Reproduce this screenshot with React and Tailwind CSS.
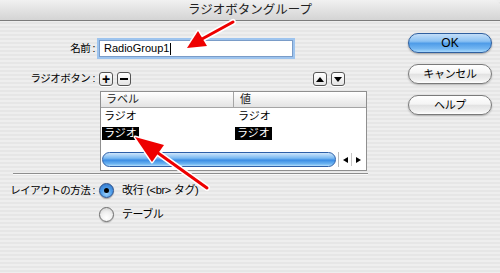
const font = "font-['Lucida_Grande','Liberation_Sans','Noto_Sans_CJK_JP',sans-serif]";

function SmallButton({ children }) {
  return (
    <div className="w-[14px] h-[14px] rounded-[3px] border border-[#555] bg-[linear-gradient(to_bottom,#ffffff,#e4e4e4)] flex items-center justify-center shadow-[0_1px_0_#fff]">
      {children}
    </div>
  );
}

function AquaButton({ label, primary }) {
  return (
    <div
      className={
        primary
          ? "h-[20px] w-[84px] rounded-full border border-[#2f5f9f] bg-[linear-gradient(to_bottom,#c3def8_0%,#8cc2f3_40%,#4f9ce8_52%,#71b5f1_80%,#a6d7fb_100%)] flex items-center justify-center text-[12px] text-black shadow-[0_1px_2px_rgba(0,0,0,0.35)]"
          : "h-[20px] w-[84px] rounded-full border border-[#7a7a7a] bg-[linear-gradient(to_bottom,#ffffff_0%,#f4f4f4_45%,#e2e2e2_52%,#f1f1f1_85%,#ffffff_100%)] flex items-center justify-center text-[11px] tracking-[-0.3px] text-black shadow-[0_1px_2px_rgba(0,0,0,0.25)]"
      }
    >
      {label}
    </div>
  );
}

function Radio({ checked }) {
  return checked ? (
    <div className="w-[15px] h-[15px] rounded-full border border-[#2a4f8a] bg-[radial-gradient(circle_at_50%_75%,#9fd2fb_0%,#4e9de9_45%,#2f6fc4_100%)] flex items-center justify-center shadow-[0_1px_1px_rgba(0,0,0,0.3)]">
      <div className="w-[5px] h-[5px] rounded-full bg-black" />
    </div>
  ) : (
    <div className="w-[15px] h-[15px] rounded-full border border-[#6d6d6d] bg-[radial-gradient(circle_at_50%_75%,#ffffff_0%,#efefef_50%,#c9c9c9_100%)] shadow-[0_1px_1px_rgba(0,0,0,0.2)]" />
  );
}

function Label({ children }) {
  return <div className="w-[99px] text-right pr-[4px] text-[10.5px] tracking-[-0.5px] whitespace-nowrap">{children}</div>;
}

export default function App() {
  return (
    <div
      className={`relative w-[500px] h-[273px] overflow-hidden text-[11px] text-black ${font} bg-[repeating-linear-gradient(to_bottom,#eeeeee_0px,#eeeeee_2px,#e6e6e6_2px,#e6e6e6_4px)]`}
    >
      {/* title bar */}
      <div className="h-[21px] rounded-tr-[6px] bg-[linear-gradient(to_bottom,#f1f1f1,#d4d4d4)] border-b border-[#7c7c7c] flex items-center justify-center text-[12.5px] text-[#222]">
        ラジオボタングループ
      </div>

      <div className="flex">
        {/* left side */}
        <div className="w-[408px]">
          <div className="flex items-center mt-[19px] h-[17px]">
            <Label>名前 :</Label>
            <div className="w-[194px] h-[17px] bg-white border border-[#7a9cc8] shadow-[0_0_0_2px_#9ec4ee] flex items-center pl-[4px] text-[11px]">
              RadioGroup1<span className="w-px h-[12px] bg-black ml-px" />
            </div>
          </div>

          <div className="flex items-center mt-[15px] h-[14px]">
            <Label>ラジオボタン :</Label>
            <div className="w-[246px] flex justify-between">
              <div className="flex gap-[4px]">
                <SmallButton>
                  <span className="text-[14px] font-bold leading-none">+</span>
                </SmallButton>
                <SmallButton>
                  <span className="w-[8px] h-[2px] bg-black" />
                </SmallButton>
              </div>
              <div className="flex gap-[4px]">
                <SmallButton>
                  <span className="w-0 h-0 border-x-[4px] border-x-transparent border-b-[5px] border-b-black" />
                </SmallButton>
                <SmallButton>
                  <span className="w-0 h-0 border-x-[4px] border-x-transparent border-t-[5px] border-t-black" />
                </SmallButton>
              </div>
            </div>
          </div>

          {/* table */}
          <div className="ml-[100px] mt-[5px] w-[267px] h-[80px] bg-white border border-[#8f8f8f] flex flex-col">
            <div className="h-[16px] flex bg-[linear-gradient(to_bottom,#ffffff,#e3e3e3)] border-b border-[#a5a5a5] text-[#222]">
              <div className="w-[133px] pl-[5px] border-r border-[#a5a5a5] flex items-center">ラベル</div>
              <div className="flex-1 pl-[6px] flex items-center">値</div>
            </div>
            <div className="h-[17px] flex items-center">
              <div className="w-[133px] pl-[3px]">ラジオ</div>
              <div className="flex-1 pl-[4px]">ラジオ</div>
            </div>
            <div className="h-[16px] flex items-center">
              <div className="w-[133px] pl-[1px]">
                <span className="bg-black text-white px-[2px] leading-[13px] inline-block">ラジオ</span>
              </div>
              <div className="flex-1 pl-[1px]">
                <span className="bg-black text-white px-[2px] leading-[13px] inline-block">ラジオ</span>
              </div>
            </div>
            <div className="mt-auto mb-[2px] h-[17px] flex items-center">
              <div className="w-[234px] h-[15px] ml-[1px] rounded-full border border-[#2d5fa8] bg-[linear-gradient(to_bottom,#cfe6fb_0%,#79b9f2_40%,#3a8ce4_55%,#6fb6f2_85%,#b8defb_100%)]" />
              <div className="flex-1 h-[15px] flex items-center border-l border-[#bbb] ml-[2px]">
                <div className="w-[12px] flex justify-center">
                  <span className="w-0 h-0 border-y-[3px] border-y-transparent border-r-[5px] border-r-black" />
                </div>
                <div className="h-[13px] w-px bg-[#c5c5c5]" />
                <div className="w-[12px] flex justify-center">
                  <span className="w-0 h-0 border-y-[3px] border-y-transparent border-l-[5px] border-l-black" />
                </div>
              </div>
            </div>
          </div>

          <div className="ml-[13px] w-[355px] mt-[2px] border-t border-[#8e8e8e] border-b border-b-[#fafafa]" />

          <div className="flex items-center mt-[8px] h-[15px]">
            <Label>レイアウトの方法 :</Label>
            <Radio checked />
            <span className="ml-[8px] tracking-[-0.3px]">改行 (&lt;br&gt; タグ)</span>
          </div>
          <div className="flex items-center mt-[9px] h-[15px]">
            <div className="w-[99px]" />
            <Radio />
            <span className="ml-[8px] tracking-[-0.5px]">テーブル</span>
          </div>
        </div>

        {/* right buttons */}
        <div className="flex flex-col gap-[11px] mt-[12px]">
          <AquaButton label="OK" primary />
          <AquaButton label="キャンセル" />
          <AquaButton label="ヘルプ" />
        </div>
      </div>

      {/* red annotation arrows */}
      <svg className="absolute inset-0 pointer-events-none" width="500" height="273" viewBox="0 0 500 273">
        <g strokeLinecap="round" strokeLinejoin="round">
          <line x1="233" y1="22" x2="202" y2="39" stroke="#fff" strokeWidth="6" />
          <polygon points="187,48 207,46 198,31" fill="#fff" stroke="#fff" strokeWidth="3" />
          <line x1="233" y1="22" x2="202" y2="39" stroke="#ee0000" strokeWidth="3" />
          <polygon points="187,48 207,46 198,31" fill="#ee0000" />

          <line x1="207" y1="188" x2="158" y2="153" stroke="#fff" strokeWidth="6" />
          <polygon points="135,137 164,145 152,162" fill="#fff" stroke="#fff" strokeWidth="3" />
          <line x1="207" y1="188" x2="158" y2="153" stroke="#ee0000" strokeWidth="3" />
          <polygon points="135,137 164,145 152,162" fill="#ee0000" />
        </g>
      </svg>
    </div>
  );
}
